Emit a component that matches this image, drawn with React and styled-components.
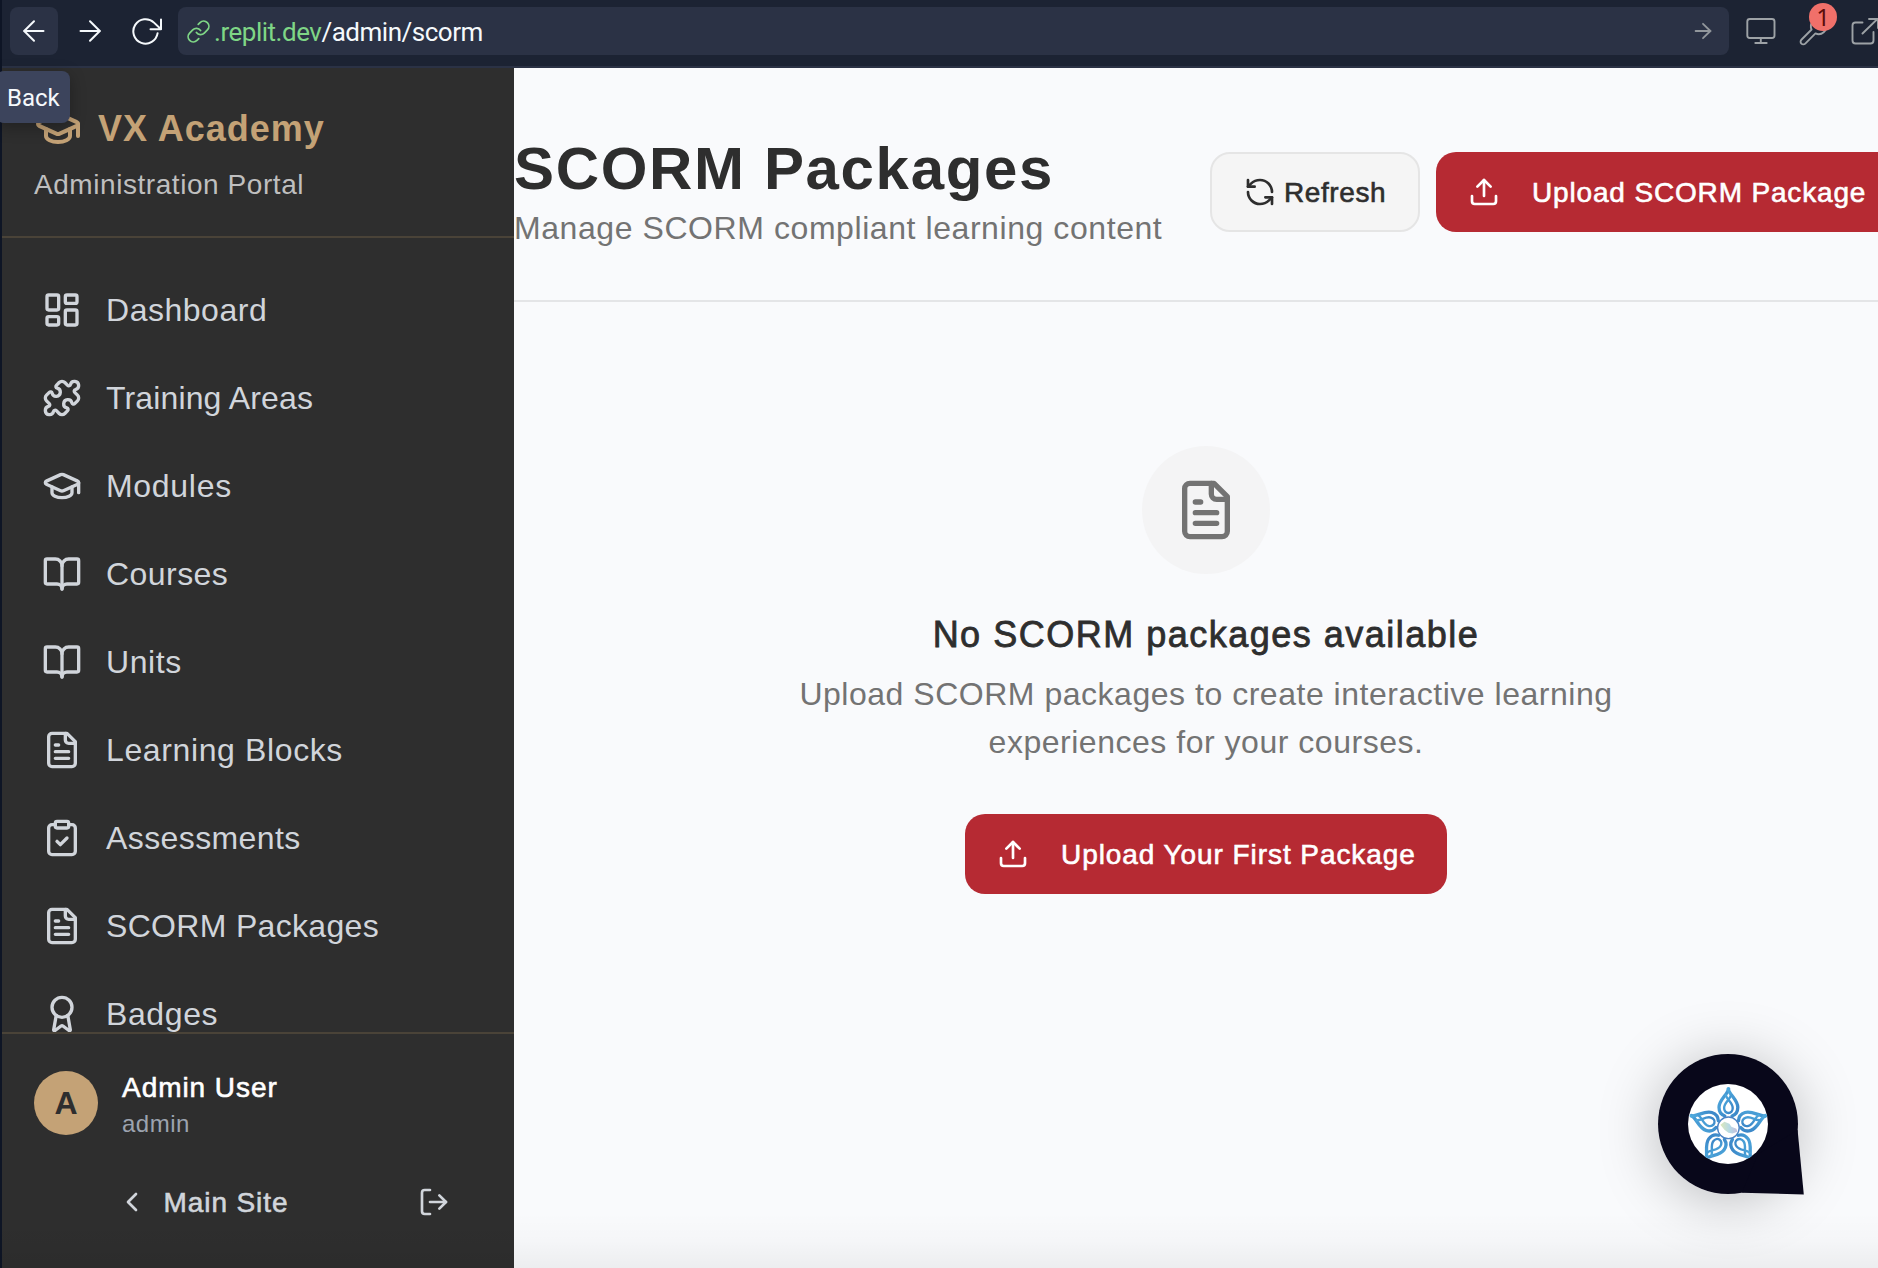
import React from "react";
import styled, { createGlobalStyle, css } from "styled-components";
import {
  LayoutDashboard,
  Puzzle,
  GraduationCap,
  BookOpen,
  ClipboardCheck,
  Award,
  ChevronLeft,
  LogOut,
  RefreshCcw,
  Upload,
  Link,
  Wrench,
} from "lucide-react";

const sans = `"Liberation Sans", Helvetica, Arial, sans-serif`;
const chromeSans = `Roboto, "Noto Sans", sans-serif`;

const GlobalStyle = createGlobalStyle`
  *, *::before, *::after { box-sizing: border-box; }
  body { margin: 0; background: #0e1525; overflow: hidden; }
  h1, h2, p { margin: 0; font-weight: 400; }
  button { margin: 0; border: 0; padding: 0; background: none; font: inherit; color: inherit; }
  svg { display: block; flex: none; }
`;

const medium = css`
  -webkit-text-stroke: ${(p) => p.$stroke || "0.6px"} currentColor;
`;

const Window = styled.div`
  position: relative;
  display: flex;
  flex-direction: column;
  width: 1878px;
  height: 1268px;
  padding-left: 2px;
  overflow: hidden;
  background: #0e1525;
  font-family: ${sans};
`;

/* Browser chrome */

const Toolbar = styled.header`
  display: flex;
  flex: none;
  align-items: flex-start;
  gap: 8px;
  height: 68px;
  padding: 7px 0 0 8px;
  background: #1c2333;
  border-bottom: 2px solid #2b3245;
`;

const ToolButton = styled.button`
  display: flex;
  flex: none;
  align-items: center;
  justify-content: center;
  width: 48px;
  height: 48px;
  border-radius: 8px;
  color: #f5f9fc;
  background: ${(p) => (p.$active ? "#2b3245" : "transparent")};
`;

const AddressBar = styled.div`
  display: flex;
  flex: 1;
  align-items: center;
  height: 48px;
  padding: 0 16px 0 8px;
  border-radius: 8px;
  background: #2b3245;
`;

const Secure = styled.span`
  color: #7fd686;
`;

const Url = styled.span`
  flex: 1;
  margin-left: 3px;
  padding-top: 1px;
  font: 400 26px/48px ${chromeSans};
  letter-spacing: -0.48px;
  color: #f5f9fc;
`;

const Muted = styled.span`
  color: #92979c;
`;

const ToolGroup = styled.div`
  display: flex;
  flex: none;
  width: 149px;
  margin-left: -8px;
  padding-left: 6px;
  color: #9da2a6;
`;

const ToolSlot = styled.div`
  position: relative;
  display: flex;
  flex: none;
  align-items: center;
  justify-content: center;
  width: 52px;
  height: 48px;
`;

const CountBadge = styled.span`
  position: absolute;
  left: 22px;
  top: -4px;
  width: 28px;
  height: 28px;
  border-radius: 50%;
  background: #f0706a;
  color: #5c0d0a;
  font: 400 24px/28px "Noto Sans", sans-serif;
  text-align: center;
`;

const Tooltip = styled.div`
  position: absolute;
  left: -4px;
  top: 71px;
  z-index: 3;
  width: 74px;
  height: 52px;
  padding-left: 11px;
  border-radius: 8px;
  background: #3c445c;
  box-shadow: 0 4px 16px rgba(0, 0, 0, 0.3);
  color: #f5f9fc;
  font: 400 24px/54px ${chromeSans};
`;

/* Sidebar */

const Page = styled.div`
  display: flex;
  flex: 1;
  min-height: 0;
`;

const Sidebar = styled.aside`
  display: flex;
  flex: none;
  flex-direction: column;
  width: 512px;
  background: #2e2e2e;
  color: #d1d5db;
`;

const Brand = styled.div`
  flex: none;
  height: 170px;
  padding: 32px;
  border-bottom: 2px solid #4a4338;
`;

const BrandRow = styled.div`
  display: flex;
  align-items: center;
  gap: 16px;
  height: 56px;
  color: #c4a276;
`;

const BrandName = styled.span`
  padding-top: 2px;
  font-size: 36px;
  font-weight: 700;
  line-height: 56px;
  letter-spacing: 1px;
`;

const BrandNote = styled.p`
  margin-top: 9px;
  font-size: 28px;
  line-height: 40px;
  letter-spacing: 0.56px;
  color: #bfbfbf;
`;

const Nav = styled.nav`
  display: flex;
  flex: 1;
  flex-direction: column;
  gap: 8px;
  min-height: 0;
  padding: 32px 32px 0;
  overflow: hidden;
`;

const NavItem = styled.a`
  display: flex;
  flex: none;
  align-items: center;
  gap: 24px;
  height: 80px;
  padding-left: 8px;
  font-size: 32px;
  line-height: 48px;
  letter-spacing: ${(p) => p.$tracking}px;
  white-space: nowrap;
`;

const Account = styled.div`
  flex: none;
  height: 236px;
  padding: 32px;
  border-top: 2px solid #4a4338;
`;

const UserRow = styled.div`
  display: flex;
  align-items: center;
  gap: 24px;
`;

const Avatar = styled.div`
  display: flex;
  align-items: center;
  justify-content: center;
  width: 64px;
  height: 64px;
  border-radius: 50%;
  background: #c4a276;
  color: #2e2e2e;
  font-size: 32px;
  font-weight: 700;
`;

const UserText = styled.div`
  padding-top: 2px;
`;

const UserName = styled.p`
  font-size: 28px;
  line-height: 40px;
  letter-spacing: 0.95px;
  color: #fff;
  ${medium}
`;

const UserRole = styled.p`
  font-size: 24px;
  line-height: 32px;
  letter-spacing: 0.5px;
  color: #9ca3af;
`;

const AccountActions = styled.div`
  display: flex;
  gap: 16px;
  margin-top: 22px;
`;

const GhostButton = styled.button`
  display: flex;
  flex: ${(p) => (p.$grow ? "1" : "none")};
  align-items: center;
  justify-content: center;
  gap: 16px;
  width: 96px;
  height: 80px;
  font-size: 28px;
  letter-spacing: 0.9px;
  ${medium}
`;

/* Main */

const Main = styled.main`
  display: flex;
  flex: 1;
  flex-direction: column;
  min-width: 0;
  overflow: hidden;
  background: #f9fafc;
  color: #2e2e2e;
`;

const Content = styled.div`
  flex: none;
  width: 1384px;
`;

const PageHeader = styled.div`
  display: flex;
  align-items: center;
  justify-content: space-between;
  height: 234px;
  padding: 64px 0 48px;
  border-bottom: 2px solid #e4e5e7;
`;

const Title = styled.h1`
  padding-top: 2px;
  font-size: 60px;
  font-weight: 700;
  line-height: 70px;
  letter-spacing: 1.65px;
  white-space: nowrap;
`;

const Subtitle = styled.p`
  font-size: 32px;
  line-height: 48px;
  letter-spacing: 0.57px;
  color: #737373;
  white-space: nowrap;
`;

const Actions = styled.div`
  display: flex;
  flex: none;
  gap: 16px;
`;

const Button = styled.button`
  display: flex;
  flex: none;
  align-items: center;
  gap: ${(p) => (p.$outline ? 8 : 32)}px;
  width: ${(p) => p.$width}px;
  height: 80px;
  padding-left: 32px;
  border: ${(p) => (p.$outline ? "2px solid #e5e5e5" : "0")};
  border-radius: 20px;
  background: ${(p) => (p.$outline ? "#f5f5f5" : "#b62a33")};
  color: ${(p) => (p.$outline ? "#2e2e2e" : "#fff")};
  font-size: 28px;
  line-height: 40px;
  letter-spacing: ${(p) => p.$tracking}px;
  white-space: nowrap;
  ${medium}
`;

const Label = styled.span`
  padding-top: 2px;
`;

const Empty = styled.section`
  display: flex;
  flex-direction: column;
  align-items: center;
  padding-top: 144px;
  text-align: center;
`;

const EmptyIcon = styled.div`
  display: flex;
  align-items: center;
  justify-content: center;
  width: 128px;
  height: 128px;
  margin-bottom: 32px;
  border-radius: 50%;
  background: #f4f4f5;
  color: #737373;
`;

const EmptyTitle = styled.h2`
  padding-top: 1px;
  font-size: 36px;
  line-height: 55px;
  letter-spacing: 1.5px;
  ${medium}
`;

const EmptyText = styled.p`
  width: 896px;
  margin: 8px 0 48px;
  font-size: 32px;
  line-height: 48px;
  letter-spacing: 0.52px;
  color: #737373;
`;

const ChatWidget = styled.div`
  position: absolute;
  left: 1658px;
  top: 1054px;
  z-index: 2;
  width: 148px;
  height: 142px;

  &::before {
    content: "";
    position: absolute;
    left: 0;
    top: 0;
    width: 140px;
    height: 140px;
    border-radius: 50%;
    box-shadow: 0 6px 60px rgba(0, 0, 0, 0.26);
  }

  svg {
    position: relative;
  }
`;

const BottomShade = styled.div`
  position: absolute;
  left: 0;
  right: 0;
  bottom: 0;
  z-index: 1;
  height: 56px;
  background: linear-gradient(to bottom, rgba(0, 0, 0, 0), rgba(0, 0, 0, 0.015) 50%, rgba(0, 0, 0, 0.05));
  pointer-events: none;
`;

/* Drawings */

const Line = ({ w, h, children, stroke = 2 }) => (
  <svg width={w} height={h} viewBox={`0 0 ${w} ${h}`} fill="none" stroke="currentColor" strokeWidth={stroke} strokeLinecap="round" strokeLinejoin="round">
    {children}
  </svg>
);

const FileText = ({ size }) => (
  <svg width={size} height={size} viewBox="0 0 24 24" fill="none" stroke="currentColor" strokeWidth="2" strokeLinecap="round" strokeLinejoin="round">
    <path d="M15 2H6a2 2 0 0 0-2 2v16a2 2 0 0 0 2 2h12a2 2 0 0 0 2-2V7Z" />
    <path d="M14 2v4a2 2 0 0 0 2 2h4" />
    <path d="M10 9H8M16 13H8M16 17H8" />
  </svg>
);

const petals = [0, 72, 144, 216, 288];

const ChatBubble = () => (
  <svg width="148" height="142" viewBox="0 0 148 142">
    <defs>
      <clipPath id="face">
        <circle cx="70" cy="70" r="40" />
      </clipPath>
      <linearGradient id="petal" x1="0" y1="0" x2="1" y2="1">
        <stop offset="0" stopColor="#4faadd" />
        <stop offset="1" stopColor="#3a84c6" />
      </linearGradient>
      <linearGradient id="map" x1="0" y1="0" x2="1" y2="0">
        <stop offset="0" stopColor="#dde8bb" />
        <stop offset="0.55" stopColor="#b5d9e6" />
        <stop offset="1" stopColor="#c6bedb" />
      </linearGradient>
    </defs>
    <circle cx="70" cy="70" r="70" fill="#08071a" />
    <path d="M139.6 76 L145.8 140.4 L84 138.7 L100 100 Z" fill="#08071a" />
    <circle cx="70" cy="70" r="40" fill="#fff" />
    <g clipPath="url(#face)">
      <g transform="translate(70.4 73.8)">
        {petals.map((angle) => (
          <g key={angle} transform={`rotate(${angle})`} fill="none" stroke="url(#petal)" strokeWidth="3.3" strokeLinecap="round">
            <path d="M0.3 -39 C-1 -33 -9.4 -28 -9.4 -20.5 C-9.4 -16 -7 -13 -3.6 -11.8" />
            <path d="M-0.3 -39 C1 -33 9.4 -28 9.4 -20.5 C9.4 -16 7 -13 3.6 -11.8" />
            <path strokeWidth="2.4" d="M-2.6 -32.5 C-1.4 -28 4.3 -25 4.3 -19.8 C4.3 -16.8 2.4 -14.8 0 -14.8 C-2.4 -14.8 -4.3 -16.8 -4.3 -19.8 C-4.3 -25 1.4 -28 2.6 -32.5" />
            <path strokeWidth="2" d="M0 -26 V-20" />
          </g>
        ))}
        <circle r="10.8" fill="#fff" stroke="#4b83c4" strokeWidth="1.4" />
        <path d="M-8 -3 L-4 -6 L1 -4 L3 -1 L8 1 L9 4 L4 5.6 L0 5 L-4 2 Z" fill="url(#map)" />
      </g>
    </g>
  </svg>
);

const navItems = [
  { label: "Dashboard", Icon: LayoutDashboard, tracking: 0.52 },
  { label: "Training Areas", Icon: Puzzle, tracking: 0.14 },
  { label: "Modules", Icon: GraduationCap, tracking: 0.7 },
  { label: "Courses", Icon: BookOpen, tracking: 0.45 },
  { label: "Units", Icon: BookOpen, tracking: 0.6 },
  { label: "Learning Blocks", Icon: FileText, tracking: 0.62 },
  { label: "Assessments", Icon: ClipboardCheck, tracking: 0.4 },
  { label: "SCORM Packages", Icon: FileText, tracking: 0.32 },
  { label: "Badges", Icon: Award, tracking: 0.6 },
];

export default function App() {
  return (
    <Window>
      <GlobalStyle />
      <Toolbar>
        <ToolButton $active aria-label="Back">
          <Line w={24} h={24}>
            <path d="M21.5 12H2M12 2.2 2.2 12l9.8 9.8" />
          </Line>
        </ToolButton>
        <ToolButton aria-label="Forward">
          <Line w={24} h={24}>
            <path d="M2.5 12H22M12 2.2l9.8 9.8-9.8 9.8" />
          </Line>
        </ToolButton>
        <ToolButton aria-label="Reload">
          <Line w={32} h={32}>
            <path d="M27.6 18.2A12.2 12.2 0 1 1 24 7.6L31 14.2M31 4.5v9.7H20.5" />
          </Line>
        </ToolButton>
        <AddressBar>
          <Secure>
            <Link size={25} strokeWidth={1.7} />
          </Secure>
          <Url>
            <Secure>.replit.dev</Secure>/admin/scorm
          </Url>
          <Muted>
            <Line w={20} h={20} stroke={1.8}>
              <path d="M2.6 10h15M10 2.800l7.400 7.200-7.400 7.200" />
            </Line>
          </Muted>
        </AddressBar>
        <ToolGroup>
          <ToolSlot>
            <Line w={32} h={32} stroke={1.9}>
              <rect x="2.3" y="4" width="27.2" height="19" rx="2.5" />
              <path d="M15.8 23v5M10.3 28h11.4" />
            </Line>
          </ToolSlot>
          <ToolSlot>
            <Wrench size={31} strokeWidth={1.45} />
            <CountBadge>1</CountBadge>
          </ToolSlot>
          <ToolSlot>
            <Line w={32} h={32} stroke={1.9}>
              <path d="M13.5 7.5H6.5a3 3 0 0 0-3 3V25.500a3 3 0 0 0 3 3h15a3 3 0 0 0 3-3v-8.500M13.500 18.500 28.500 4M20 4h9v9" />
            </Line>
          </ToolSlot>
        </ToolGroup>
      </Toolbar>
      <Tooltip>Back</Tooltip>

      <Page>
        <Sidebar>
          <Brand>
            <BrandRow>
              <GraduationCap size={48} />
              <BrandName>VX Academy</BrandName>
            </BrandRow>
            <BrandNote>Administration Portal</BrandNote>
          </Brand>
          <Nav>
            {navItems.map(({ label, Icon, tracking }) => (
              <NavItem key={label} $tracking={tracking}>
                <Icon size={40} />
                {label}
              </NavItem>
            ))}
          </Nav>
          <Account>
            <UserRow>
              <Avatar>A</Avatar>
              <UserText>
                <UserName>Admin User</UserName>
                <UserRole>admin</UserRole>
              </UserText>
            </UserRow>
            <AccountActions>
              <GhostButton $grow>
                <ChevronLeft size={32} />
                <Label>Main Site</Label>
              </GhostButton>
              <GhostButton aria-label="Log out">
                <LogOut size={32} />
              </GhostButton>
            </AccountActions>
          </Account>
        </Sidebar>

        <Main>
          <Content>
            <PageHeader>
              <div>
                <Title>SCORM Packages</Title>
                <Subtitle>Manage SCORM compliant learning content</Subtitle>
              </div>
              <Actions>
                <Button $outline $width={210} $tracking={0.6}>
                  <RefreshCcw size={32} />
                  <Label>Refresh</Label>
                </Button>
                <Button $width={462} $tracking={0.84}>
                  <Upload size={32} />
                  <Label>Upload SCORM Package</Label>
                </Button>
              </Actions>
            </PageHeader>
            <Empty>
              <EmptyIcon>
                <FileText size={64} />
              </EmptyIcon>
              <EmptyTitle $stroke="0.8px">No SCORM packages available</EmptyTitle>
              <EmptyText>
                Upload SCORM packages to create interactive learning experiences for your courses.
              </EmptyText>
              <Button $width={482} $tracking={0.93}>
                <Upload size={32} />
                <Label>Upload Your First Package</Label>
              </Button>
            </Empty>
          </Content>
        </Main>
      </Page>

      <BottomShade />
      <ChatWidget>
        <ChatBubble />
      </ChatWidget>
    </Window>
  );
}
